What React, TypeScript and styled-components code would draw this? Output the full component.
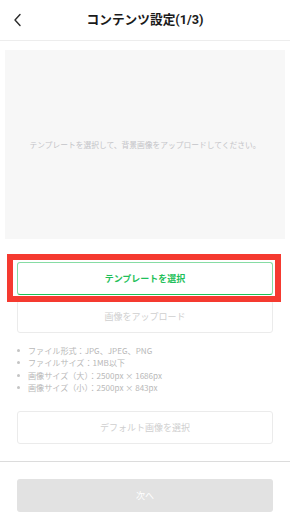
import React from "react";
import styled, { createGlobalStyle } from "styled-components";

const Global = createGlobalStyle`
  html, body { margin: 0; padding: 0; background: #fff; }
  body {
    font-family: "Noto Sans CJK JP", "Noto Sans", sans-serif;
    -webkit-font-smoothing: antialiased;
  }
  * { box-sizing: border-box; }
`;

const Page = styled.div`
  width: 290px;
  height: 519px;
  display: flex;
  flex-direction: column;
  background: #fff;
  overflow: hidden;
`;

const Header = styled.header`
  height: 41px;
  flex: none;
  border-bottom: 1px solid #ededed;
  display: grid;
  grid-template-columns: 40px 1fr 40px;
  align-items: center;
`;

const BackButton = styled.button`
  border: 0;
  background: none;
  padding: 0 0 0 13px;
  height: 40px;
  display: flex;
  align-items: center;
  color: #222;
`;

const Title = styled.h1`
  margin: 0;
  text-align: center;
  font-family: "Roboto", "Noto Sans CJK JP", sans-serif;
  font-size: 12.7px;
  font-weight: 700;
  color: #1a1a1a;
  line-height: 38px;
`;

const Preview = styled.div`
  margin: 9px 5px 0;
  height: 189px;
  background: #f7f7f7;
  display: flex;
  align-items: center;
  justify-content: center;
  font-size: 7.75px;
  color: #c4c4c8;
  white-space: nowrap;
`;

const Body = styled.div`
  padding: 0 17px;
  display: flex;
  flex-direction: column;
`;

const ButtonWrap = styled.div`
  position: relative;
  margin-top: 23px;
`;

const Highlight = styled.div`
  position: absolute;
  left: -10px;
  right: -8px;
  top: -8px;
  bottom: -7px;
  border: 6px solid #f53a30;
  pointer-events: none;
`;

const OutlineButton = styled.button<{ $variant?: "primary" | "disabled" }>`
  width: 100%;
  height: 33px;
  border-radius: 3px;
  background: #fff;
  font-family: inherit;
  font-size: 9px;
  font-weight: ${(p) => (p.$variant === "primary" ? 700 : 400)};
  color: ${(p) => (p.$variant === "primary" ? "#1fbf5a" : "#cfcfcf")};
  border: 1px solid ${(p) => (p.$variant === "primary" ? "#86dca4" : "#ebebeb")};
  border-bottom-color: ${(p) => (p.$variant === "primary" ? "#1bc255" : "#ebebeb")};
  display: flex;
  align-items: center;
  justify-content: center;
  padding: 0;
`;

const UploadButton = styled(OutlineButton)`
  margin-top: 5px;
`;

const DefaultButton = styled(OutlineButton)`
  margin-top: 17px;
`;

const SpecList = styled.ul`
  list-style: none;
  margin: 11px 0 0;
  padding: 0;
`;

const SpecItem = styled.li`
  display: flex;
  align-items: center;
  gap: 8px;
  height: 12.5px;
  font-size: 8.1px;
  color: #b8b8b8;
  white-space: nowrap;
  &::before {
    content: "";
    width: 3px;
    height: 3px;
    border-radius: 50%;
    background: #c4c4c4;
    flex: none;
  }
`;

const Divider = styled.hr`
  margin: 17px 0 0;
  border: 0;
  border-top: 1px solid #dcdcdc;
  width: 100%;
`;

const Footer = styled.div`
  padding: 17px 17px 0;
`;

const NextButton = styled.button`
  width: 100%;
  height: 33px;
  border: 0;
  border-radius: 3px;
  background: #e2e2e2;
  color: #fff;
  font-family: inherit;
  font-size: 9px;
  display: flex;
  align-items: center;
  justify-content: center;
`;

const specs = [
  "ファイル形式：JPG、JPEG、PNG",
  "ファイルサイズ：1MB以下",
  "画像サイズ（大）：2500px × 1686px",
  "画像サイズ（小）：2500px × 843px",
];

export default function App() {
  return (
    <Page>
      <Global />
      <Header>
        <BackButton aria-label="戻る">
          <svg width="9" height="14" viewBox="0 0 9 14" fill="none">
            <path d="M7 1.5L2 7l5 5.5" stroke="#2a2a2a" strokeWidth="1.4" strokeLinecap="round" strokeLinejoin="round" />
          </svg>
        </BackButton>
        <Title>コンテンツ設定(1/3)</Title>
        <span />
      </Header>
      <Preview>テンプレートを選択して、背景画像をアップロードしてください。</Preview>
      <Body>
        <ButtonWrap>
          <OutlineButton $variant="primary">テンプレートを選択</OutlineButton>
          <Highlight />
        </ButtonWrap>
        <UploadButton $variant="disabled">画像をアップロード</UploadButton>
        <SpecList>
          {specs.map((s) => (
            <SpecItem key={s}>{s}</SpecItem>
          ))}
        </SpecList>
        <DefaultButton $variant="disabled">デフォルト画像を選択</DefaultButton>
      </Body>
      <Divider />
      <Footer>
        <NextButton>次へ</NextButton>
      </Footer>
    </Page>
  );
}
